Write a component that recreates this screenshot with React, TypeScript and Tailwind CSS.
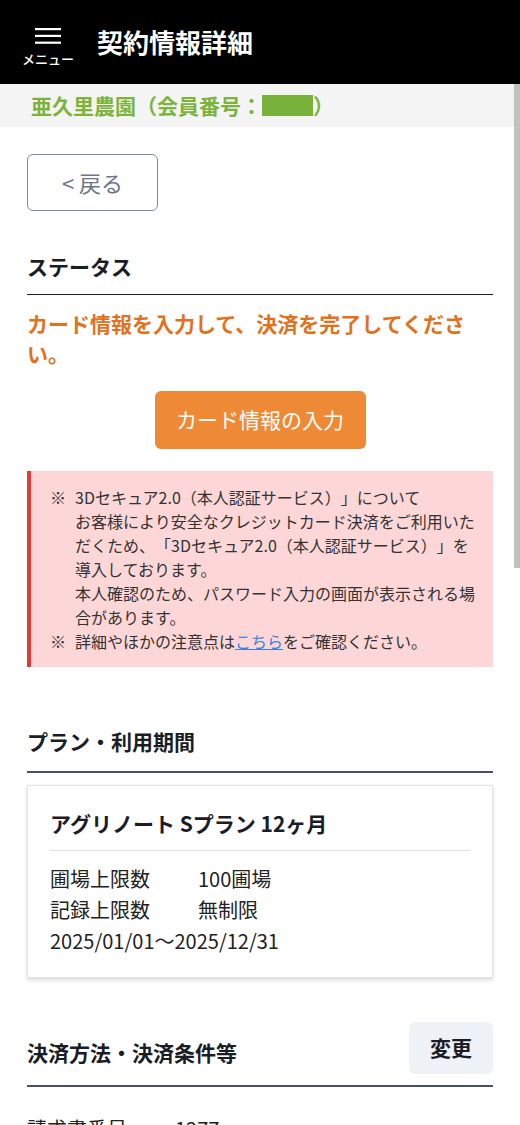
import React from "react";

const MenuIcon = () => (
  <svg width="26" height="16" viewBox="0 0 26 16" fill="#fff">
    <rect x="0" y="0" width="26" height="2.2" />
    <rect x="0" y="6.8" width="26" height="2.2" />
    <rect x="0" y="13.6" width="26" height="2.2" />
  </svg>
);

const NoticeLine = ({ mark, children }: { mark?: boolean; children: React.ReactNode }) => (
  <div className="flex">
    <span className="w-[25px] shrink-0">{mark ? "※" : ""}</span>
    <span className="whitespace-nowrap">{children}</span>
  </div>
);

const App = () => {
  return (
    <div className="relative h-[1125px] overflow-hidden bg-white font-['Noto_Sans_CJK_JP','Noto_Sans',sans-serif] text-[#222] [text-spacing-trim:space-all]">
      <header className="flex h-[84px] items-center bg-black text-white">
        <button className="ml-[22px] mt-[10px] flex w-[52px] flex-col items-center gap-[7px]">
          <MenuIcon />
          <span className="text-[13px] font-medium leading-[15px]">メニュー</span>
        </button>
        <h1 className="ml-[23px] text-[26px] font-bold leading-none">契約情報詳細</h1>
      </header>

      <div className="flex h-[43px] items-center bg-[#f4f4f4] px-[31px] text-[21px] font-bold text-[#7cb33b]">
        亜久里農園（会員番号：
        <span className="inline-block h-[21px] w-[51px] bg-[#78b23a]"></span>）
      </div>

      <main className="px-[27px] pt-[27px]">
        <button className="flex h-[57px] w-[131px] items-center justify-center rounded-[6px] border border-[#7d8aa0] text-[22px] text-[#6b7689]">
          &lt; 戻る
        </button>

        <section className="mt-[40px]">
          <h2 className="border-b border-[#1a2035] pb-[13px] text-[21px] font-bold leading-[30px] text-[#1a1d26]">
            ステータス
          </h2>
          <p className="mt-[13px] text-[21px] font-bold leading-[30px] text-[#e2711d]">
            カード情報を入力して、決済を完了してくださ
            <br />
            い。
          </p>
          <div className="mt-[23px] flex justify-center">
            <button className="h-[58px] w-[211px] rounded-[6px] bg-[#ee8935] text-[21px] text-white">
              カード情報の入力
            </button>
          </div>
          <div className="mt-[22px] border-l-4 border-[#e53935] bg-[#fdd7d7] py-[14px] pl-[19px] text-[16px] leading-[24px] text-[#333]">
            <NoticeLine mark>3Dセキュア2.0（本人認証サービス）」について</NoticeLine>
            <NoticeLine>お客様により安全なクレジットカード決済をご利用いた</NoticeLine>
            <NoticeLine>だくため、「3Dセキュア2.0（本人認証サービス）」を</NoticeLine>
            <NoticeLine>導入しております。</NoticeLine>
            <NoticeLine>本人確認のため、パスワード入力の画面が表示される場</NoticeLine>
            <NoticeLine>合があります。</NoticeLine>
            <NoticeLine mark>
              詳細やほかの注意点は
              <a href="#" className="text-[#3d7fd9] underline">
                こちら
              </a>
              をご確認ください。
            </NoticeLine>
          </div>
        </section>

        <section className="mt-[59px]">
          <h2 className="border-b-2 border-[#4b5060] pb-[15px] text-[21px] font-bold leading-[30px] text-[#1a1d26]">
            プラン・利用期間
          </h2>
          <div className="mt-[12px] border border-[#e2e2e2] px-[22px] pb-[21px] pt-[22px] shadow-[0_2px_4px_rgba(0,0,0,0.15)]">
            <h3 className="border-b border-[#e0e0e0] pb-[12px] text-[21px] font-bold leading-[30px] text-[#1a1d26]">
              アグリノート Sプラン 12ヶ月
            </h3>
            <div className="mt-[12px] text-[20px] leading-[31px] text-[#222]">
              <div className="flex">
                <span className="w-[148px]">圃場上限数</span>
                <span>100圃場</span>
              </div>
              <div className="flex">
                <span className="w-[148px]">記録上限数</span>
                <span>無制限</span>
              </div>
              <div>2025/01/01～2025/12/31</div>
            </div>
          </div>
        </section>

        <section className="mt-[44px]">
          <div className="flex items-end justify-between border-b-2 border-[#4b5060] pb-[11px]">
            <h2 className="mb-[7px] text-[21px] font-bold leading-[30px] text-[#1a1d26]">
              決済方法・決済条件等
            </h2>
            <button className="h-[52px] w-[84px] rounded-[6px] bg-[#eef1f6] text-[21px] font-bold text-[#1a1d26]">
              変更
            </button>
          </div>
          <div className="mt-[26px] flex text-[20px] leading-[31px] text-[#222]">
            <span className="w-[148px]">請求書番号</span>
            <span>1277</span>
          </div>
        </section>
      </main>

      <div className="absolute right-0 top-[84px] h-[484px] w-[6px] bg-[#c1c1c1]"></div>
    </div>
  );
};

export default App;
